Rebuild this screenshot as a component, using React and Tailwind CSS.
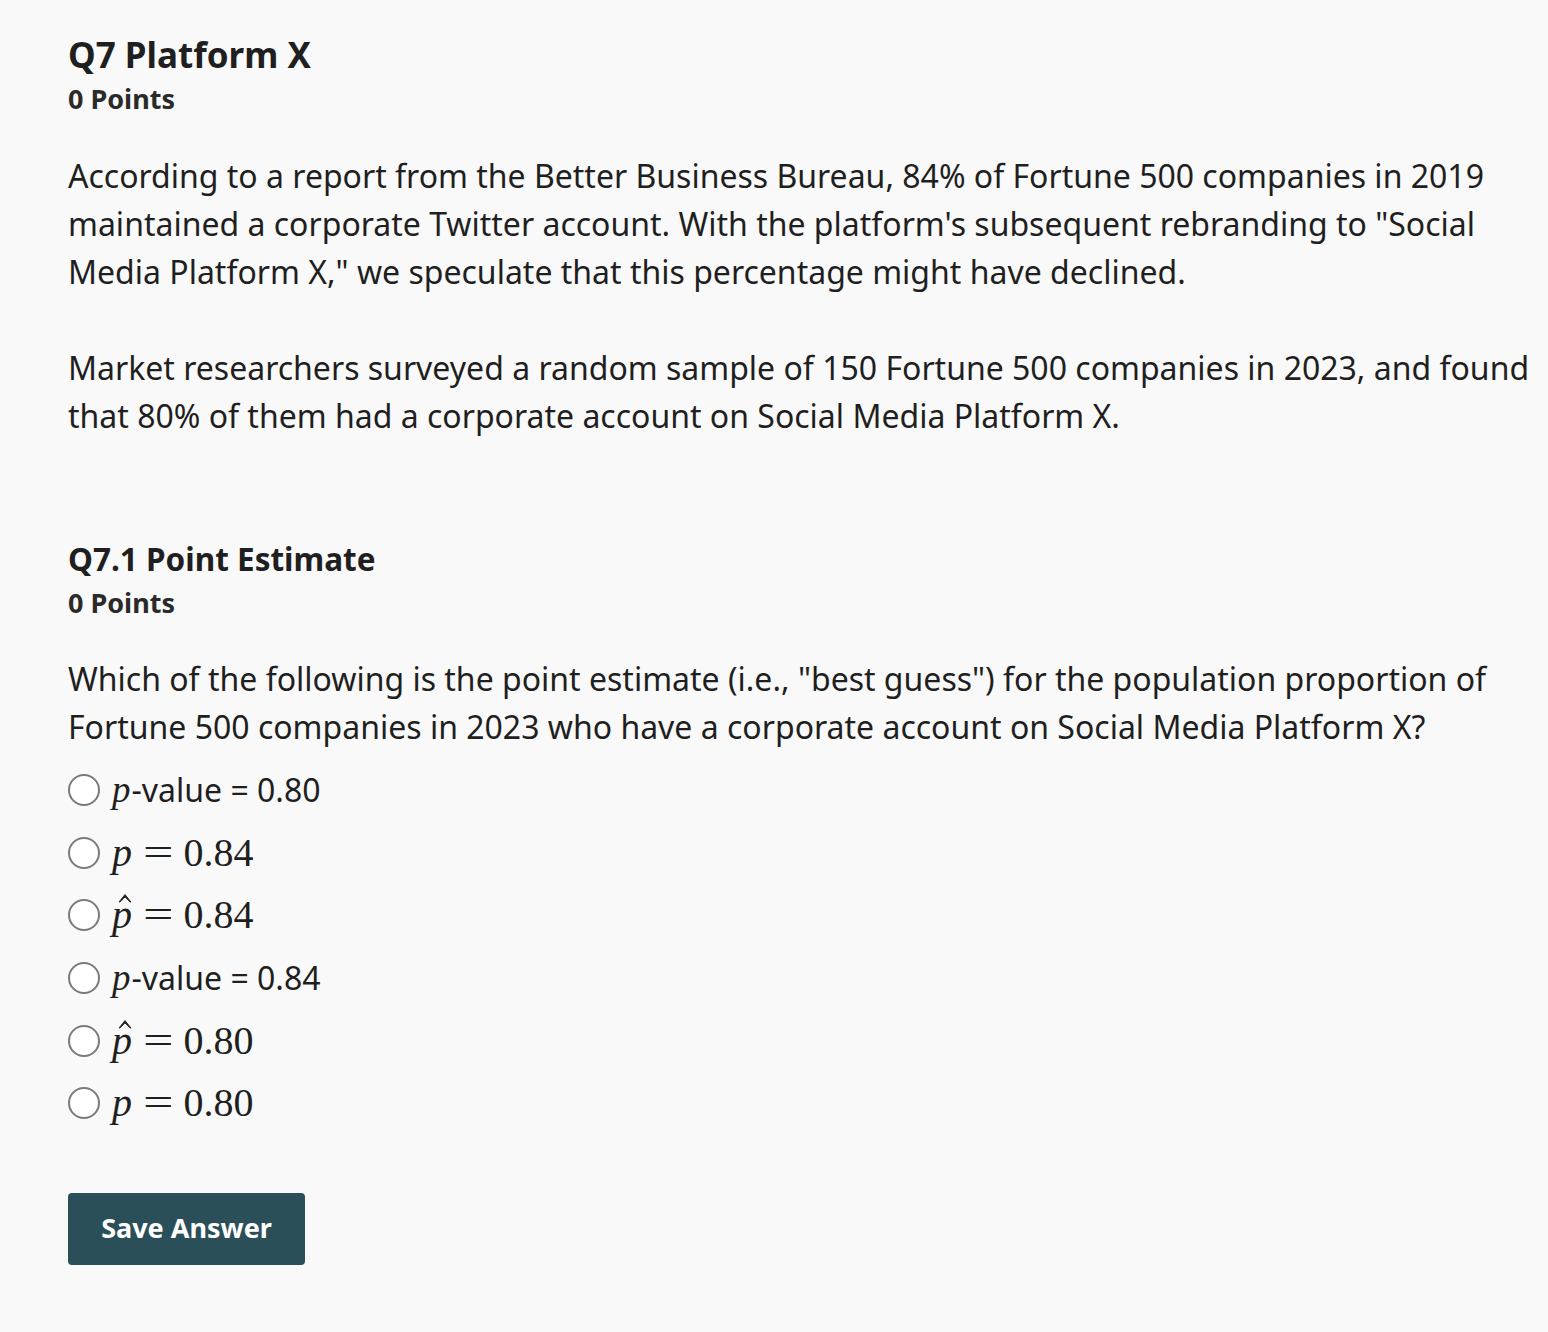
const serif = { fontFamily: '"Liberation Serif", "DejaVu Serif", serif' };

const Pv = ({ v }) => (
    <span className="flex items-baseline">
        <span className="italic text-[37px] leading-none mr-[1px]" style={serif}>p</span>
        <span>-value = {v}</span>
    </span>
);

// circumflex accent drawn over the p
const Hat = () => (
    <svg className="absolute left-[6px] top-[-2px]" width="14" height="10" viewBox="0 0 14 10">
        <path d="M1 9 L7 1.5 L13 9 L12 9 L7 4 L2 9 Z" fill="#1f1f1f" stroke="#1f1f1f" strokeWidth="0.8" strokeLinejoin="round" />
    </svg>
);

const MathEq = ({ hat, v }) => (
    <span className="flex items-baseline text-[40px] leading-none" style={serif}>
        <span className="relative italic">
            p{hat && <Hat />}
        </span>
        <span className="inline-block scale-x-[1.35] ml-[15px] mr-[14px]">=</span>
        <span>{v}</span>
    </span>
);

const options = [
    <Pv v="0.80" />,
    <MathEq v="0.84" />,
    <MathEq hat v="0.84" />,
    <Pv v="0.84" />,
    <MathEq hat v="0.80" />,
    <MathEq v="0.80" />,
];

export default function App() {
    return (
        <div className="min-h-[1332px] bg-[#f9f9f9] text-[#1f1f1f] pl-[68px] pr-4 pt-[32px]" style={{ fontFamily: '"Noto Sans", sans-serif' }}>
            {/* Q7 header */}
            <h1 className="text-[35px] font-bold leading-[46px]">Q7 Platform X</h1>
            <div className="text-[27px] font-bold leading-[42px] text-[#2a2a2a]">0 Points</div>

            <div className="mt-[32px] text-[32px] leading-[48px]">
                <p>
                    According to a report from the Better Business Bureau, 84% of Fortune 500 companies in 2019 maintained a corporate Twitter account. With the platform's subsequent rebranding to "Social Media Platform X," we speculate that this percentage might have declined.
                </p>
                <p className="mt-[48px]">
                    Market researchers surveyed a random sample of 150 Fortune 500 companies in 2023, and found that 80% of them had a corporate account on Social Media Platform X.
                </p>
            </div>

            {/* Q7.1 */}
            <h2 className="mt-[97px] text-[31.5px] font-bold leading-[44px]">Q7.1 Point Estimate</h2>
            <div className="text-[27px] font-bold leading-[44px] text-[#2a2a2a]">0 Points</div>

            <p className="mt-[30px] text-[32px] leading-[48px]">
                Which of the following is the point estimate (i.e., "best guess") for the population proportion of Fortune 500 companies in 2023 who have a corporate account on Social Media Platform X?
            </p>

            <div className="mt-[8px] flex flex-col text-[32px]">
                {options.map((o, i) => (
                    <label key={i} className="flex items-center h-[62.6px]">
                        <span className="w-[32px] h-[32px] rounded-full border-2 border-[#7a7a7a] bg-white shrink-0" />
                        <span className="ml-[12px] flex items-center">{o}</span>
                    </label>
                ))}
            </div>

            <button className="mt-[58px] w-[237px] h-[72px] rounded-[4px] bg-[#2b4f59] text-white text-[27px] font-bold">
                Save Answer
            </button>
        </div>
    );
}
